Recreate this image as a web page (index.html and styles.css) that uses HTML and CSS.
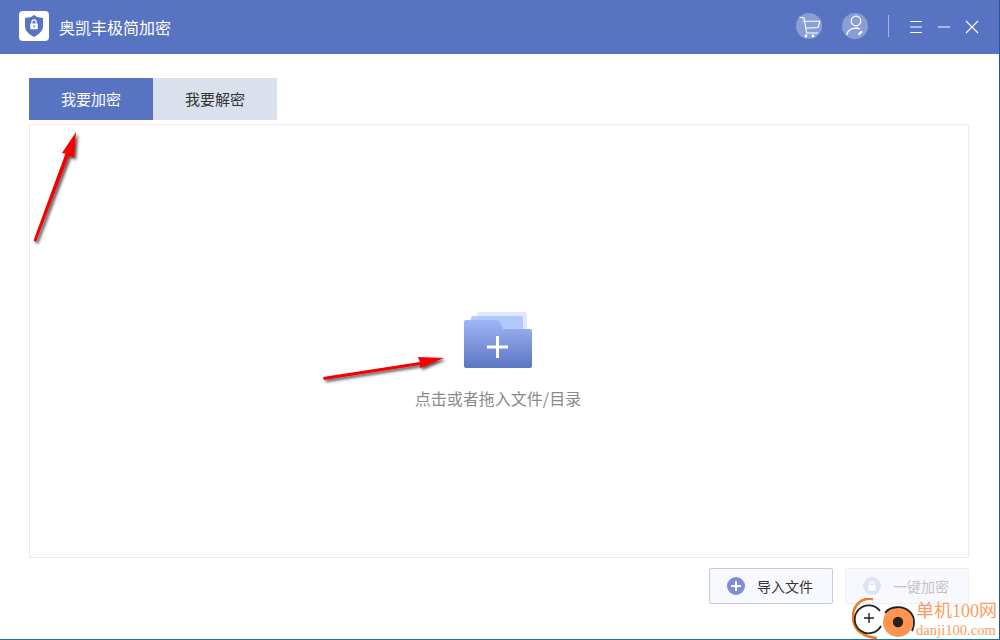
FILE: index.html
```html
<!DOCTYPE html>
<html>
<head>
  <meta charset="utf-8">
  <title>奥凯丰极简加密</title>
  <link rel="stylesheet" href="styles.css">
</head>
<body>
  <div id="app">
    <div id="titleBar">
      <div class="logo">
        <svg width="18" height="22" viewBox="0 0 18 22">
          <path d="M9 0 L12 2 L18 3 V11 C18 15.8 14 19.4 9 22 C4 19.4 0 15.8 0 11 V3 L6 2 Z" fill="#5873c1"/>
          <path d="M6.9 9 V7 A2.1 2.1 0 0 1 11.1 7 V9" fill="none" stroke="#fff" stroke-width="1.2"/>
          <rect x="5.2" y="8.6" width="7.6" height="5.6" rx="0.8" fill="#fff"/>
          <rect x="8.4" y="10.2" width="1.2" height="2.2" fill="#5873c1"/>
        </svg>
      </div>
      <div class="app-name">奥凯丰极简加密</div>
      <div class="title-actions">
        <span class="round-icon">
          <svg width="26" height="26" viewBox="0 0 26 26" fill="none" stroke="#fff" stroke-width="1.1">
            <path d="M3.3 4.3 L8 5 L10.7 20 H22"/>
            <path d="M6.7 8.3 H24 L22 14.5 L9 15.2"/>
            <circle cx="10" cy="23" r="0.9" fill="#fff"/>
            <circle cx="17" cy="23" r="0.9" fill="#fff"/>
          </svg>
        </span>
        <span class="round-icon">
          <svg width="26" height="26" viewBox="0 0 26 26" fill="none" stroke="#fff" stroke-width="1.2">
            <circle cx="14" cy="8" r="4.8"/>
            <path d="M4.8 22 C5.5 17.4 9 15.4 14 15.2 C15.5 15.2 17 15.5 18 16"/>
            <path d="M16.4 21.8 L20 18.2" stroke-width="2"/>
          </svg>
        </span>
        <span class="divider"></span>
        <svg class="win-btn" width="14" height="14" viewBox="0 0 14 14" stroke="#fff" stroke-width="1">
          <path d="M1 1.5 H13 M1 7 H13 M1 12.5 H13"/>
        </svg>
        <svg class="win-btn" width="14" height="14" viewBox="0 0 14 14" stroke="#fff" stroke-width="1">
          <path d="M1 7 H13"/>
        </svg>
        <svg class="win-btn" width="14" height="14" viewBox="0 0 14 14" stroke="#fff" stroke-width="1.1">
          <path d="M1 1 L13 13 M13 1 L1 13"/>
        </svg>
      </div>
    </div>

    <div id="content">
      <div class="tabs">
        <div class="tab active">我要加密</div>
        <div class="tab">我要解密</div>
      </div>

      <div id="dropBox">
        <svg class="folder" width="68" height="56" viewBox="0 0 68 56">
          <defs>
            <linearGradient id="folderFill" x1="0" y1="0" x2="0" y2="1">
              <stop offset="0" stop-color="#a0b6f6"/>
              <stop offset="1" stop-color="#5d76c2"/>
            </linearGradient>
          </defs>
          <path d="M13 2 Q13 0 15 0 H61 Q63 0 63 2 V20 H13 Z" fill="#dfe8fd"/>
          <path d="M7 6 Q7 4 9 4 H57 Q59 4 59 6 V20 H7 Z" fill="#b4c9fb"/>
          <path d="M0 10 Q0 8 2 8 H33 Q35 8 36 10 L39 17 H66 Q68 17 68 19 V54 Q68 56 66 56 H2 Q0 56 0 54 Z" fill="url(#folderFill)"/>
          <path d="M32 24 H35 V33.5 H44 V36.5 H35 V46 H32 V36.5 H23 V33.5 H32 Z" fill="#fff"/>
        </svg>
        <div class="drop-text">点击或者拖入文件/目录</div>
      </div>

      <div class="actions">
        <div class="action-button">
          <svg width="18" height="18" viewBox="0 0 18 18">
            <circle cx="9" cy="9" r="9" fill="#7b90d8"/>
            <path d="M8 4 H10 V8 H14 V10 H10 V14 H8 V10 H4 V8 H8 Z" fill="#fff"/>
          </svg>
          <span>导入文件</span>
        </div>
        <div class="action-button disabled">
          <svg width="18" height="18" viewBox="0 0 18 18">
            <circle cx="9" cy="9" r="9" fill="#dfe3f3"/>
            <path d="M6.8 8.4 V6.8 A2.2 2.2 0 0 1 11.2 6.8 V8.4" fill="none" stroke="#fff" stroke-width="1.2"/>
            <rect x="5.4" y="8.2" width="7.2" height="5.4" rx="0.8" fill="#fff"/>
          </svg>
          <span>一键加密</span>
        </div>
      </div>
    </div>

    <svg class="arrows" width="1000" height="640" viewBox="0 0 1000 640">
      <defs>
        <filter id="arrowShadow" x="-30%" y="-30%" width="160%" height="160%">
          <feDropShadow dx="2" dy="2" stdDeviation="1.6" flood-color="#000" flood-opacity="0.7"/>
        </filter>
      </defs>
      <g filter="url(#arrowShadow)" fill="#f50000">
        <path d="M33.5 240.5 L65.5 153.5 L62 153 L76 132 L74 158 L69 155.5 L36 242 Z"/>
        <path d="M323 377 L420 362 L418 357 L444 358 L420 368 L420 365 L324 380 Z"/>
      </g>
    </svg>

    <div class="watermark">
      <svg width="76" height="42" viewBox="0 0 76 42">
        <path d="M21 1 C8 -1 0 9 1 21 C2 32 11 39 25 40" fill="none" stroke="#f47a1f" stroke-width="2.6"/>
        <path d="M28 13 A14 14 0 1 0 29 28" fill="#fff" stroke="#222" stroke-width="1.8"/>
        <path d="M17 15 V25 M12 20 H22" stroke="#222" stroke-width="1.4"/>
        <circle cx="46" cy="24" r="15" fill="#ff9350"/>
        <path d="M33 15 C38 8 51 7 58 14 C63 19 63 27 60 33" fill="none" stroke="#222" stroke-width="1.8"/>
        <circle cx="46" cy="24" r="5.2" fill="#222"/>
      </svg>
      <div class="wm-text">
        <div class="wm-name">单机100网</div>
        <div class="wm-url">danji100.com</div>
      </div>
    </div>
  </div>
</body>
</html>
```

FILE: styles.css
```css
html, body {
  margin: 0;
  padding: 0;
}

body {
  font-family: "Noto Sans CJK SC", "Liberation Sans", sans-serif;
  background-color: #fff;
}

#app {
  position: relative;
  width: 1000px;
  height: 640px;
  box-sizing: border-box;
  display: flex;
  flex-direction: column;
  border-right: 1px solid #1d5c94;
  border-bottom: 1px solid #1b76ae;
  overflow: hidden;
}

/* title bar */
#titleBar {
  height: 54px;
  box-sizing: border-box;
  flex-shrink: 0;
  display: flex;
  align-items: center;
  padding: 0 20px 2px 19px;
  background-color: #5873c1;
  color: #fff;
}

.logo {
  width: 30px;
  height: 30px;
  display: flex;
  align-items: center;
  justify-content: center;
  margin-right: 10px;
  border-radius: 4px;
  background-color: #fff;
}

.app-name {
  margin-top: 1px;
  font-size: 16px;
}

.title-actions {
  margin-left: auto;
  display: flex;
  align-items: center;
}

.round-icon {
  width: 26px;
  height: 26px;
  margin-right: 20px;
  border-radius: 50%;
  background-color: #8a9ed6;
}

.round-icon svg {
  display: block;
}

.divider {
  width: 1px;
  height: 22px;
  margin-right: 20px;
  background-color: #a5b4e0;
}

.win-btn {
  margin: 1px 14px 0 0;
  display: block;
}

.win-btn:last-child {
  margin-right: 0;
}

/* content */
#content {
  flex-grow: 1;
  display: flex;
  flex-direction: column;
  padding: 24px 30px 35px 29px;
}

.tabs {
  display: flex;
  margin-bottom: 4px;
}

.tab {
  width: 124px;
  height: 42px;
  line-height: 42px;
  text-align: center;
  font-size: 15px;
  color: #333;
  background-color: #dbe1ec;
}

.tab.active {
  color: #fff;
  background-color: #5873c1;
}

#dropBox {
  height: 434px;
  box-sizing: border-box;
  display: flex;
  flex-direction: column;
  align-items: center;
  border: 1px solid #ececec;
  padding: 187px 2px 0 0;
}

.folder {
  display: block;
}

.drop-text {
  margin-top: 18px;
  font-size: 16px;
  line-height: 24px;
  color: #8a8a8a;
}

.actions {
  display: flex;
  justify-content: flex-end;
  gap: 12px;
  margin-top: 10px;
}

.action-button {
  width: 124px;
  height: 36px;
  box-sizing: border-box;
  display: flex;
  align-items: center;
  padding-left: 17px;
  font-size: 14px;
  color: #333;
  border: 1px solid #c5cbe3;
  border-radius: 2px;
  background-color: #f8f9fe;
}

.action-button span {
  margin-left: 12px;
}

.action-button.disabled {
  color: #c4c4c4;
  border-color: #eceef5;
}

/* drawn over the screenshot */
.arrows {
  position: absolute;
  left: 0;
  top: 0;
  pointer-events: none;
}

.watermark {
  position: absolute;
  left: 852px;
  top: 598px;
  display: flex;
}

.wm-text {
  margin-left: -12px;
  color: #ff9a5e;
  font-family: "Liberation Serif", "Noto Sans CJK SC", serif;
}

.wm-name {
  font-size: 18px;
  line-height: 22px;
  margin-top: 2px;
}

.wm-url {
  font-size: 14.6px;
  line-height: 17px;
}
```
